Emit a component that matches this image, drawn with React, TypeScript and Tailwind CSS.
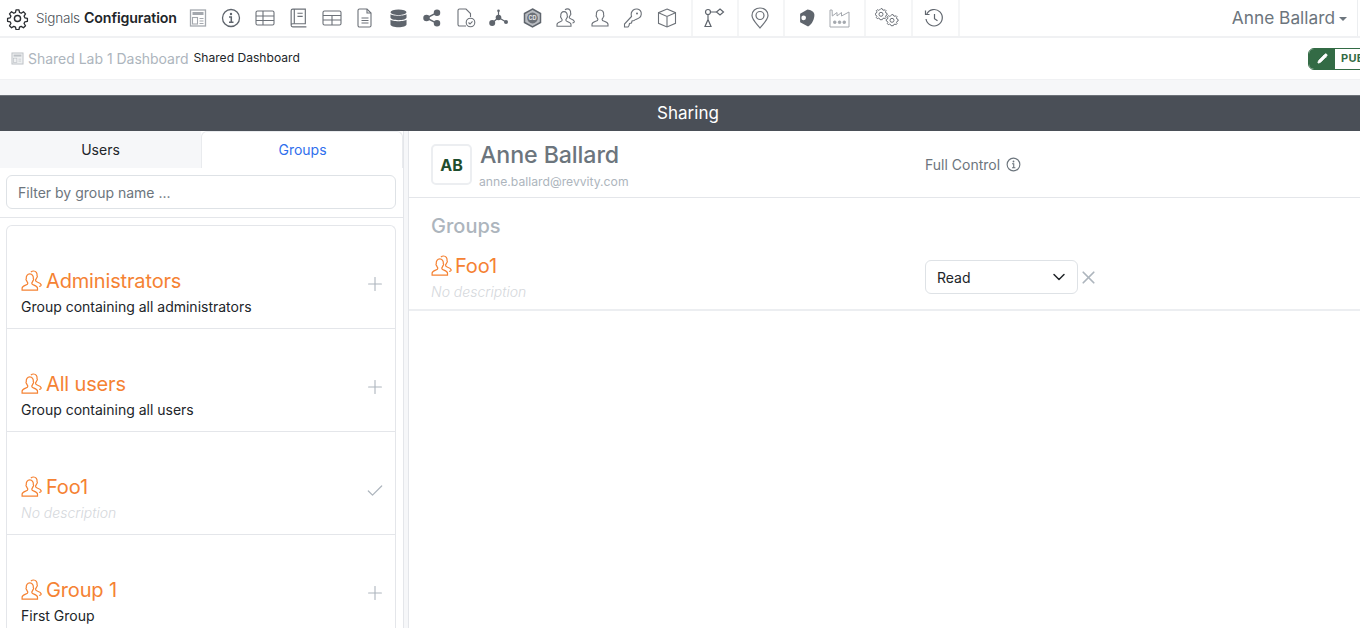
import type { ReactNode } from "react";
import { Check, ChevronDown, Pencil, Plus, X } from "lucide-react";

const font = { fontFamily: "Inter, 'Noto Sans', sans-serif" };

const Svg = ({ size = 20, className = "", children }: { size?: number; className?: string; children: ReactNode }) => (
  <svg width={size} height={size} viewBox="0 0 20 20" fill="none" stroke="currentColor" strokeWidth="1.1" className={className}>
    {children}
  </svg>
);

const UsersIcon = ({ size = 22, className = "" }: { size?: number; className?: string }) => (
  <Svg size={size} className={className}>
    <path d="M1 18.2v-1.6c0-1.4 1.6-2.2 3.2-2.8 1.3-.5 2-1 2-1.8 0-.7-.8-1.2-1.2-2.4-.5-.2-.6-1.3-.2-1.6-.3-2.6 1-4.4 3.2-4.4s3.500 1.800 3.200 4.400c.4.300.3 1.400-.2 1.600-.4 1.200-1.200 1.700-1.200 2.400 0 .8.700 1.300 2 1.800 1.600.6 3.200 1.400 3.200 2.800v1.600z" />
    <path d="M9 1.800c.7-.6 1.500-.9 2.400-.9 2.200 0 3.500 1.800 3.200 4.400.4.300.3 1.400-.2 1.600-.4 1.200-1.200 1.700-1.200 2.400 0 .8.700 1.300 2 1.800 1.400.5 2.800 1.200 3.100 2.300.2.800-.5 1.400-1.800 1.500" />
  </Svg>
);

const navIcons: ReactNode[] = [
  <Svg key="dash" size={20} className="text-[#a4a8ae]">
    <rect x="2.500" y="2" width="15" height="16" strokeWidth="1.300" />
    <rect x="4.500" y="4" width="11" height="3" fill="currentColor" stroke="none" />
    <rect x="4.500" y="9.500" width="5" height="6.500" />
    <path d="M11.500 10.500h4M11.500 13h4M11.500 15.500h4" />
  </Svg>,
  <Svg key="info" size={20} className="text-[#5f656d]">
    <circle cx="10" cy="10" r="8.500" strokeWidth="1.300" />
    <circle cx="10" cy="6" r="1.200" fill="currentColor" stroke="none" />
    <path d="M8 9h2.300v5M8 14.300h4.500" strokeWidth="1.500" />
  </Svg>,
  <Svg key="table" size={20} className="text-[#6c7178]">
    <rect x="1" y="3" width="18" height="14" rx="1.500" />
    <path d="M1 8h18M1 12.500h18M8 3v14" />
  </Svg>,
  <Svg key="book" size={21} className="text-[#6c7178]">
    <path d="M3 16V2.500C3 1.700 3.700 1 4.500 1H16.500v14H4.500C3.700 15 3 15.500 3 16.500S3.700 18 4.500 18H17.500" />
    <path d="M6 1v14M9 5h5M9 8h5" />
  </Svg>,
  <Svg key="table2" size={20} className="text-[#6c7178]">
    <rect x="1" y="3" width="18" height="14" rx="1.500" />
    <path d="M1 7.500h18M1 12h18M10 7.500V17" />
  </Svg>,
  <Svg key="doc" size={20} className="text-[#6c7178]">
    <path d="M4.500 1H12l4 4v12.500c0 .8-.7 1.500-1.500 1.500h-10C3.700 19 3 18.300 3 17.500v-15C3 1.700 3.700 1 4.500 1z" />
    <path d="M12 1v4h4M6.500 10h7M6.500 12.500h7M6.500 15h7" />
  </Svg>,
  <svg key="db" width="17" height="19" viewBox="0 0 18 20" fill="#5f656d">
    <ellipse cx="9" cy="3.500" rx="8.500" ry="3" />
    <path d="M.5 5.500C2 7.500 16 7.500 17.500 5.500V9c0 1.700-3.800 2.800-8.500 2.800S.5 10.700.5 9z" />
    <path d="M.5 11.300c1.500 2 15.500 2 17 0v5c0 1.700-3.800 3-8.500 3s-8.500-1.300-8.500-3z" />
  </svg>,
  <svg key="share" width="18" height="18" viewBox="0 0 18 18" fill="#5f656d" stroke="#5f656d" strokeWidth="1.500">
    <circle cx="14" cy="3.700" r="2.500" />
    <circle cx="3.500" cy="9" r="2.500" />
    <circle cx="14" cy="14.300" r="2.500" />
    <path d="M14 3.700L3.500 9 14 14.300" fill="none" />
  </svg>,
  <Svg key="doccheck" size={20} className="text-[#6c7178]">
    <path d="M10 18H3.500C2.700 18 2 17.300 2 16.500v-14C2 1.700 2.700 1 3.500 1H10l4.500 4.500V9" />
    <circle cx="14.500" cy="14.500" r="4.300" />
    <path d="M12.500 14.500l1.500 1.500 2.500-2.700" />
  </Svg>,
  <svg key="graph" width="20" height="19" viewBox="0 0 20 19" fill="#5f656d" stroke="#5f656d">
    <circle cx="9.500" cy="1.800" r="1.300" stroke="none" />
    <circle cx="9.500" cy="8.500" r="2.800" stroke="none" />
    <circle cx="3.200" cy="14" r="3" stroke="none" />
    <circle cx="17" cy="13" r="2" stroke="none" />
    <path d="M9.500 2v6.500M3.200 14l6.300-5.500 7.500 4.500" strokeWidth="1.200" fill="none" />
  </svg>,
  <svg key="cd" width="19" height="20" viewBox="0 0 19 20">
    <path d="M9.500 1l8 4.500v9l-8 4.500-8-4.500v-9z" fill="#b9bcc1" stroke="#5f656d" strokeWidth="1.500" />
    <circle cx="9.500" cy="10" r="5.400" fill="#6c7178" />
    <text x="9.500" y="12" textAnchor="middle" fontSize="5.500" fontWeight="700" fill="#e6e7e9" style={font}>CD</text>
  </svg>,
  <UsersIcon key="users" size={20} className="text-[#6c7178]" />,
  <Svg key="user" size={20} className="text-[#6c7178]">
    <path d="M2 18v-1.800c0-1.400 1.700-2.200 3.700-2.900 1.500-.5 2.200-1 2.200-1.900 0-.7-.9-1.300-1.300-2.600-.6-.2-.7-1.400-.2-1.700C6 4 7.400 2 10 2s4 2 3.600 5.100c.5.300.4 1.500-.2 1.700-.4 1.300-1.300 1.900-1.300 2.600 0 .9.700 1.400 2.200 1.900 2 .7 3.700 1.500 3.700 2.900V18z" />
  </Svg>,
  <Svg key="key" size={20} className="text-[#6c7178]">
    <path d="M11 12.500l-2 .5-.5 2-2 .5-.5 2-1 1.500H1.500v-3l7-7.500C7.800 6 8.500 3.500 10.300 2c2.300-1.700 5.500-1.200 7 .7 1.600 2 1.200 5.300-.8 7-1.500 1.300-3.700 1.700-5.500 2.800z" />
    <circle cx="14" cy="5.500" r="1" fill="currentColor" stroke="none" />
  </Svg>,
  <Svg key="cube" size={20} className="text-[#6c7178]">
    <path d="M10 1l8.500 3.700v10.600L10 19l-8.500-3.700V4.700z" />
    <path d="M1.500 4.700L10 8.500l8.500-3.800M10 8.500V19" />
  </Svg>,
];

const Divider = () => <div className="w-[2px] h-[36px] bg-[#f4f5f6] shrink-0" />;

const Cell = ({ w, children }: { w: string; children: ReactNode }) => (
  <div className={`${w} h-[36px] flex items-center justify-center shrink-0`}>{children}</div>
);

const TopNav = () => (
  <div className="h-[36px] shrink-0 flex items-center bg-white text-[#212529]">
    <div className="w-[181px] shrink-0 flex items-center pl-[6px]">
      <svg width="23" height="23" viewBox="0 0 24 24" fill="none" stroke="#2a2d31" strokeWidth="1.500" strokeLinejoin="round">
        <circle cx="12" cy="12" r="3.200" />
        <path d="M10.300 2h3.400l.6 3 2 .9 2.600-1.700 2.400 2.400-1.700 2.600.9 2 3 .6v3.400l-3 .6-.9 2 1.700 2.600-2.400 2.400-2.600-1.700-2 .9-.6 3h-3.400l-.6-3-2-.9-2.600 1.700-2.400-2.400 1.700-2.600-.9-2-3-.6v-3.400l3-.6.9-2-1.700-2.600 2.400-2.400 2.600 1.700 2-.9z" transform="translate(1.200 1.200) scale(.9)" />
      </svg>
      <span className="ml-[7px] text-[13.5px] font-light text-[#4a4f57] tracking-[-0.2px]">Signals</span>
      <span className="ml-[4px] text-[14.2px] font-semibold text-[#212529] tracking-[-0.1px]">Configuration</span>
    </div>
    <div className="flex shrink-0 w-[509px]">
      {navIcons.map((icon, i) => (
        <div key={i} className="w-[33.53px] h-[36px] flex items-center justify-center shrink-0">{icon}</div>
      ))}
    </div>
    <div className="w-[1px] shrink-0" />
    <Divider />
    <Cell w="w-[44px]">
      <svg width="24" height="20" viewBox="0 0 24 20" fill="none" stroke="#5f656d" strokeWidth="1.200">
        <circle cx="5" cy="4" r="2.500" />
        <path d="M7.500 4h6M5 6.500v5M5 11.500L2 18.500h6z" />
        <path d="M17 1l3.500 3-3.500 3-3.500-3z" />
      </svg>
    </Cell>
    <Divider />
    <Cell w="w-[44px] pr-[2px]">
      <svg width="18" height="22" viewBox="0 0 18 22" fill="none" stroke="#6c7178" strokeWidth="1.200">
        <path d="M9 21C5 16 1 12.500 1 8.500 1 4 4.600 1 9 1s8 3 8 7.500c0 4-4 7.500-8 12.500z" />
        <circle cx="9" cy="8.500" r="4" />
      </svg>
    </Cell>
    <Divider />
    <Cell w="w-[79px] gap-[14px]">
      <svg width="16" height="18" viewBox="0 0 15 17" fill="#5f656d">
        <path d="M8 .5c3 .5 6.500 2 6.500 5 0 4-2 9-6 11L1 12.500V4.500zM4.300 6.200a2.200 2.200 0 1 0 .1 4.400 2.200 2.200 0 0 0-.1-4.400z" fillRule="evenodd" />
      </svg>
      <svg width="21" height="19" viewBox="0 0 21 19" fill="none" stroke="#a4a8ae" strokeWidth="1">
        <path d="M1 18V2l.1-1h2l.2 6 4.700-3.500v3.500l4.500-3.500v3.500L20 3v15z" />
        <rect x="4.500" y="12" width="2.500" height="2.500" rx="1" fill="#a4a8ae" />
        <rect x="9.300" y="12" width="2.500" height="2.500" rx="1" fill="#a4a8ae" />
        <rect x="14" y="12" width="2.500" height="2.500" rx="1" fill="#a4a8ae" />
      </svg>
    </Cell>
    <Divider />
    <Cell w="w-[45px] pr-[4px]">
      <svg width="24" height="22" viewBox="0 0 24 22" fill="none" stroke="#6c7178" strokeWidth="1">
        <path d="M6 1.500l1.300.3.500 1.200 1.300.3 1-.6 1 1-.6 1 .4 1.300 1.200.5v1.500l-1.200.5-.4 1.200.6 1-1 1-1-.6-1.300.4-.5 1.200H5l-.5-1.200-1.200-.4-1 .6-1-1 .6-1-.4-1.200L.3 8V6.500l1.200-.5.400-1.300-.6-1 1-1 1 .6L4.500 3z" />
        <circle cx="6" cy="7.300" r="2" />
        <path d="M17 7.500l1.300.3.500 1.200 1.300.3 1-.6 1 1-.6 1 .4 1.300 1.200.5V14l-1.200.5-.4 1.200.6 1-1 1-1-.6-1.300.4-.5 1.200H16l-.5-1.200-1.200-.4-1 .6-1-1 .6-1-.4-1.200-1.200-.5v-1.500l1.200-.5.400-1.300-.6-1 1-1 1 .6 1.200-.4z" />
        <circle cx="17" cy="13.300" r="2" />
      </svg>
    </Cell>
    <Divider />
    <Cell w="w-[45px] pr-[4px]">
      <svg width="20" height="20" viewBox="0 0 20 20" fill="none" stroke="#5f656d" strokeWidth="1.200">
        <path d="M2.800 6A8.200 8.200 0 1 1 2 11" />
        <path d="M1.500 2.500v4h4" />
        <path d="M10.500 6v4.800l3 2" />
      </svg>
    </Cell>
    <Divider />
    <div className="flex-1 flex items-center justify-end pr-[10px] text-[#6c757d] text-[17.3px] leading-none">
      Anne Ballard
      <span className="ml-[4px] mt-[2px] w-0 h-0 border-x-[4.500px] border-x-transparent border-t-[4px] border-t-[#6c757d]" />
    </div>
    <div className="w-[1px] h-[36px] bg-[#eceef0] mr-[2px]" />
  </div>
);

const SubBar = () => (
  <div className="h-[44px] shrink-0 flex items-center justify-between bg-white border-t-2 border-b border-[#f0f1f3] pl-[11px] overflow-hidden">
    <div className="flex items-center">
      <svg width="13" height="13" viewBox="0 0 20 20" fill="none" stroke="#bdc1c6" strokeWidth="1.500">
        <rect x="1.500" y="1.500" width="17" height="17" fill="#eef0f1" />
        <rect x="4" y="4" width="12" height="3" fill="#bdc1c6" stroke="none" />
        <rect x="4" y="9.500" width="5" height="6.500" strokeWidth="1" />
        <path d="M11.500 11h4M11.500 14h4" strokeWidth="1" />
      </svg>
      <span className="ml-[4px] text-[14px] tracking-[-0.02px] text-[#adb5bd]">Shared Lab 1 Dashboard</span>
      <span className="ml-[5px] text-[12.1px] text-[#212529]">Shared Dashboard</span>
    </div>
    <div className="flex h-[22px] w-[92px] -mr-[40px] shrink-0 rounded-[6px] overflow-hidden border border-[#336b45]">
      <div className="w-[26px] bg-[#336b45] flex items-center justify-center shrink-0">
        <Pencil size={11} color="white" fill="white" />
      </div>
      <div className="flex-1 flex items-center pl-[6px] text-[11px] font-bold tracking-[0.3px] text-[#336b45] bg-white">PUBLISHED</div>
    </div>
  </div>
);

type Group = { name: string; description?: string; selected?: boolean };

const groups: Group[] = [
  { name: "Administrators", description: "Group containing all administrators" },
  { name: "All users", description: "Group containing all users" },
  { name: "Foo1", selected: true },
  { name: "Group 1", description: "First Group" },
];

const GroupRow = ({ group }: { group: Group }) => (
  <div className="h-[103px] shrink-0 border-b border-[#e4e6ea] flex items-end pl-[14px] pr-[9px] pb-[11px]">
    <div className="flex-1">
      <div className="flex items-center text-[#f58233] text-[20px] tracking-[-0.15px] leading-[24px]">
        <UsersIcon className="mr-[3px]" />
        {group.name}
      </div>
      {group.description ? (
        <div className="mt-[3px] text-[14px] leading-[21px] text-[#212529]">{group.description}</div>
      ) : (
        <div className="mt-[3px] text-[14px] leading-[21px] italic font-light text-[#d5d8dc]">No description</div>
      )}
    </div>
    <div className="mb-[22px] text-[#adb5bd]">
      {group.selected ? <Check size={20} strokeWidth={1.500} className="-ml-[1px] mr-[1px]" /> : <Plus size={22} strokeWidth={1.200} />}
    </div>
  </div>
);

const LeftPanel = () => (
  <div className="w-[404px] shrink-0 bg-white border-r border-[#e4e6ea] flex flex-col">
    <div className="flex h-[37px] shrink-0">
      <div className="w-[201px] bg-[#f6f7f9] flex items-center justify-center text-[14px] text-[#212529]">Users</div>
      <div className="flex-1 border border-b-0 border-[#e9ebee] rounded-t-[6px] flex items-center justify-center pl-[1px] pb-[1px] text-[14px] text-[#2f6fed]">Groups</div>
    </div>
    <div className="h-[50px] shrink-0 border-b border-[#e4e6ea] pl-[6px] pt-[7px]">
      <div className="w-[390px] h-[34px] border border-[#dee2e6] rounded-[6px] flex items-center pl-[11px] text-[14px] text-[#6c757d]">Filter by group name ...</div>
    </div>
    <div className="ml-[6px] mt-[7px] w-[390px] border border-b-0 border-[#e4e6ea] rounded-t-[6px] flex flex-col">
      {groups.map((g) => (
        <GroupRow key={g.name} group={g} />
      ))}
    </div>
  </div>
);

const RightPanel = () => (
  <div className="flex-1 bg-white border-l border-[#e4e6ea] ml-[4px]">
    <div className="h-[67px] border-b border-[#e4e6ea] flex pl-[22px]">
      <div className="mt-[13px] w-[41px] h-[41px] border-2 border-[#eceef1] rounded-[5px] flex items-center justify-center text-[16px] font-bold text-[#1f4d2e]">AB</div>
      <div className="ml-[8px] w-[445px]">
        <div className="mt-[10px] text-[23.2px] leading-[29px] font-medium tracking-[-0.1px] text-[#6c757d]">Anne Ballard</div>
        <div className="mt-[3px] -ml-[1px] text-[12.2px] leading-[18px] text-[#adb5bd]">anne.ballard@revvity.com</div>
      </div>
      <div className="mt-[23px] h-[20px] flex items-center text-[14px] text-[#6c757d]">
        Full Control
        <svg width="15" height="15" viewBox="0 0 20 20" fill="none" stroke="#6c757d" strokeWidth="1.500" className="ml-[6px]">
          <circle cx="10" cy="10" r="8.500" />
          <circle cx="10" cy="6" r="1.200" fill="#6c757d" stroke="none" />
          <path d="M8 9h2.300v5M8 14.300h4.500" />
        </svg>
      </div>
    </div>
    <div className="h-[113px] border-b-2 border-[#eceef1] pl-[22px] flex flex-col">
      <div className="mt-[16px] text-[20px] leading-[24px] font-medium text-[#adb5bd]">Groups</div>
      <div className="flex mt-[16px]">
        <div className="w-[494px]">
          <div className="flex items-center text-[#f58233] text-[20px] tracking-[-0.15px] leading-[24px]">
            <UsersIcon className="mr-[2px]" />
            Foo1
          </div>
          <div className="mt-[3px] text-[14px] leading-[21px] italic font-light text-[#d5d8dc]">No description</div>
        </div>
        <div className="mt-[6px] w-[153px] h-[34px] border border-[#dee2e6] rounded-[6px] flex items-center justify-between pl-[11px] pr-[8px] text-[14px] text-[#212529]">
          Read
          <ChevronDown size={20} strokeWidth={1.800} />
        </div>
        <X size={21} strokeWidth={2} className="mt-[12.500px] text-[#adb5bd]" />
      </div>
    </div>
  </div>
);

const App = () => (
  <div className="h-[628px] w-[1360px] overflow-hidden bg-white flex flex-col" style={font}>
    <TopNav />
    <SubBar />
    <div className="h-[15px] shrink-0 bg-[#f6f7f9]" />
    <div className="h-[36px] shrink-0 bg-[#4a4f57] flex items-center justify-center pl-[16px] text-white text-[17px] border-t border-[#6c7178]">Sharing</div>
    <div className="flex-1 flex min-h-0 bg-[#f6f7f9]">
      <LeftPanel />
      <RightPanel />
    </div>
  </div>
);

export default App;
